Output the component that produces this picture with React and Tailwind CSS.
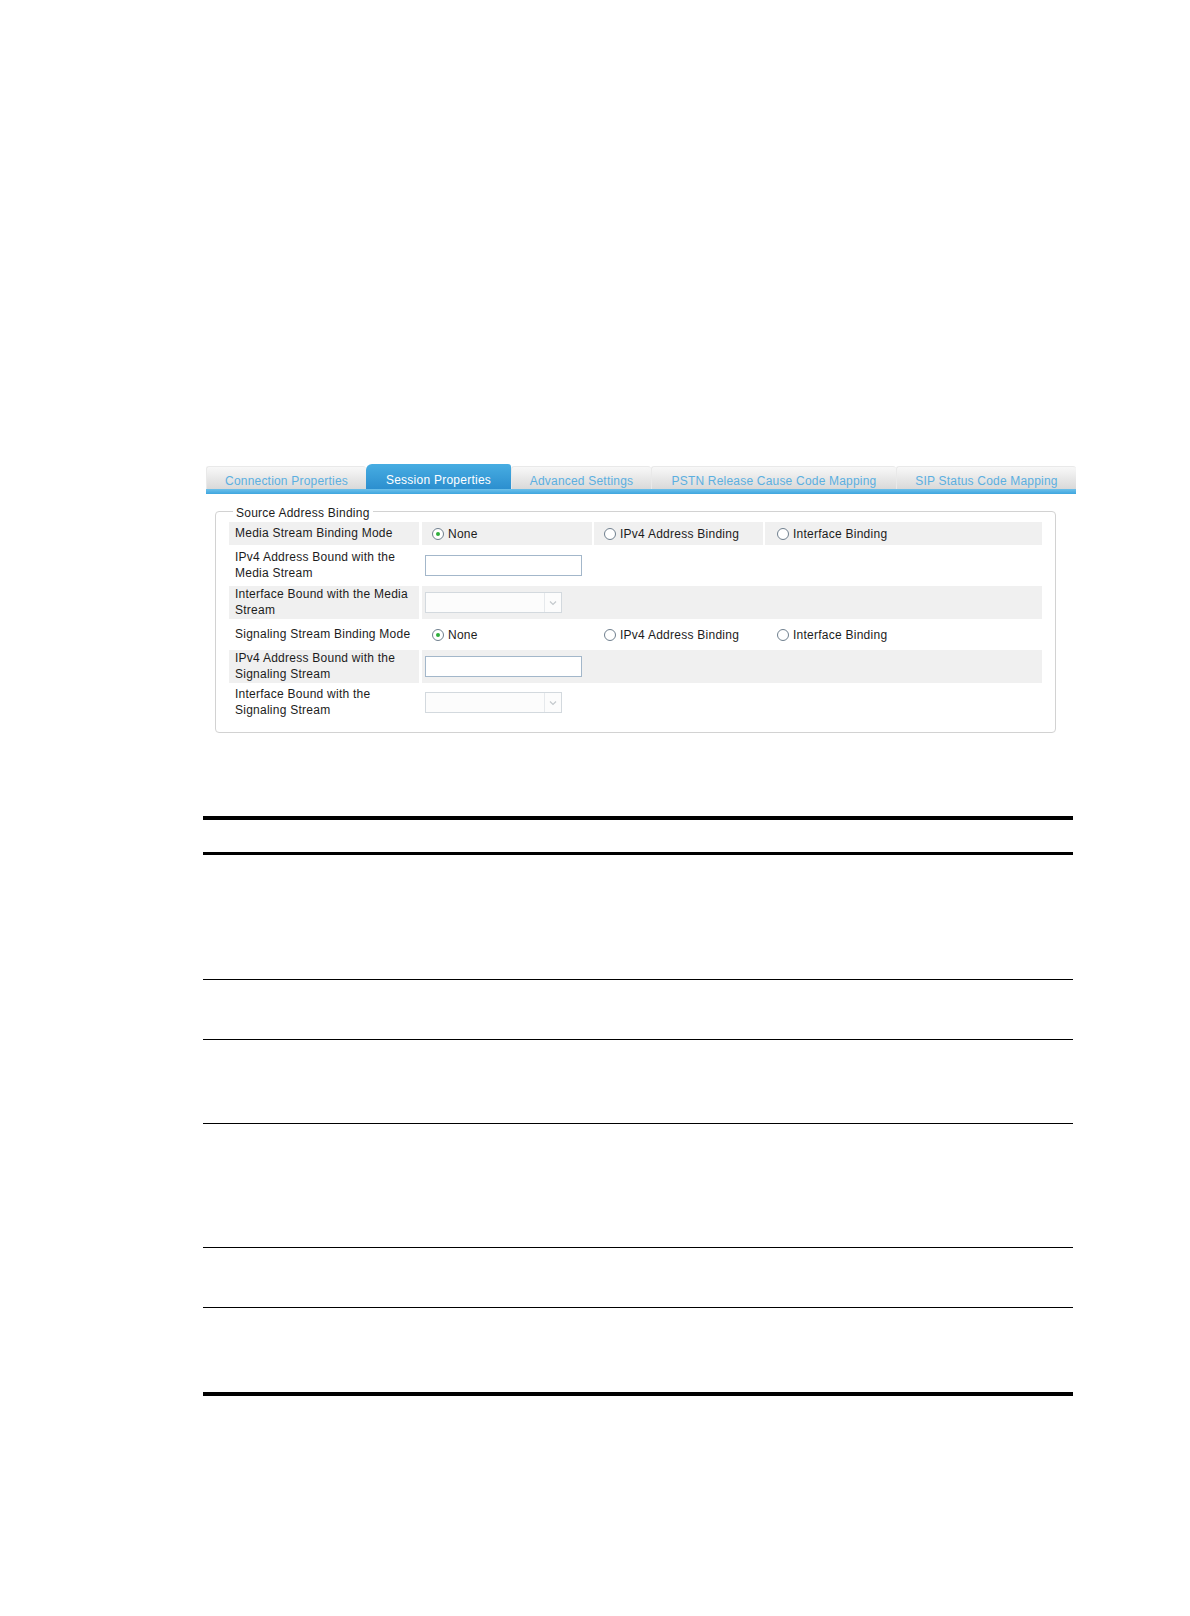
import React from 'react';

const tabs = [
    { label: 'Connection Properties', w: 'w-[160px]' },
    { label: 'Session Properties', w: 'w-[145px]', active: true },
    { label: 'Advanced Settings', w: 'w-[140px]' },
    { label: 'PSTN Release Cause Code Mapping', w: 'w-[245px]' },
    { label: 'SIP Status Code Mapping', w: 'w-[180px]' },
];

const Radio = ({ checked, label }) => (
    <span className="flex items-center gap-[4px]">
        <span className="flex h-[12px] w-[12px] items-center justify-center rounded-full border border-[#6f7f8e] bg-white">
            {checked && <span className="h-[4px] w-[4px] rounded-full bg-[#2fae3c]" />}
        </span>
        <span>{label}</span>
    </span>
);

const TextBox = () => (
    <div className="h-[21px] w-[157px] border border-[#a3b7ca] bg-white" />
);

const SelectBox = () => (
    <div className="flex h-[21px] w-[137px] border border-[#d3d9de] bg-[#fcfcfc]">
        <div className="flex-1" />
        <div className="flex w-[17px] items-center justify-center border-l border-[#e6e9ec]">
            <svg width="8" height="6" viewBox="0 0 8 6">
                <path d="M1 1.5 L4 4.5 L7 1.5" fill="none" stroke="#c3c8cc" strokeWidth="1.2" />
            </svg>
        </div>
    </div>
);

const Label = ({ children, gray }) => (
    <div className={`flex w-[190px] items-center px-[6px] leading-[15.5px] ${gray ? 'bg-[#f0f0f0]' : ''}`}>
        {children}
    </div>
);

const ModeRow = ({ label, gray, h }) => (
    <div className={`flex ${h}`}>
        <Label gray={gray}>{label}</Label>
        <div className={`ml-[3px] flex w-[170px] items-center pl-[10px] ${gray ? 'bg-[#f0f0f0]' : ''}`}>
            <Radio checked label="None" />
        </div>
        <div className={`ml-[2px] flex w-[169px] items-center pl-[10px] ${gray ? 'bg-[#f0f0f0]' : ''}`}>
            <Radio label="IPv4 Address Binding" />
        </div>
        <div className={`ml-[2px] flex flex-1 items-center pl-[12px] ${gray ? 'bg-[#f0f0f0]' : ''}`}>
            <Radio label="Interface Binding" />
        </div>
    </div>
);

const FieldRow = ({ label, gray, h, children }) => (
    <div className={`flex ${h}`}>
        <Label gray={gray}>{label}</Label>
        <div className={`ml-[3px] flex flex-1 items-center pl-[3px] ${gray ? 'bg-[#f0f0f0]' : ''}`}>
            {children}
        </div>
    </div>
);

// empty table under the screenshot, only its rules are visible
const tableRows = ['h-[125px]', 'h-[60px]', 'h-[84px]', 'h-[124px]', 'h-[60px]'];

export default function App() {
    return (
        <div className="min-h-[1616px] w-[1190px] bg-white font-['Liberation_Sans',Arial,sans-serif] text-[12px] tracking-[0.25px] text-[#1c1c1c]">
            <div className="pl-[206px] pt-[464px]">
                <div className="w-[870px]">
                    <div className="flex h-[25px] items-end">
                        {tabs.map((t) =>
                            t.active ? (
                                <div
                                    key={t.label}
                                    className={`${t.w} flex h-[25px] items-center justify-center rounded-tl-[6px] rounded-tr-[3px] bg-linear-to-b from-[#47ade2] to-[#2c8fcf] pt-[6px] text-white`}
                                >
                                    {t.label}
                                </div>
                            ) : (
                                <div
                                    key={t.label}
                                    className={`${t.w} flex h-[23px] items-center justify-center rounded-t-[3px] border-l border-t border-[#e9e9e9] bg-linear-to-b from-[#f8f8f8] to-[#d9d9d9] pt-[5px] tracking-[0.2px] text-[#5cafe0]`}
                                >
                                    {t.label}
                                </div>
                            )
                        )}
                    </div>
                    <div className="h-[5px] bg-linear-to-b from-[#6cc0ea] to-[#3ea6df]" />
                </div>
            </div>

            <div className="relative ml-[215px] mt-[17px] w-[841px] rounded-[4px] border border-[#d2d2d2] px-[13px] pb-[11px] pt-[10px]">
                <span className="absolute -top-[6px] left-[17px] bg-white px-[3px] leading-[15px]">
                    Source Address Binding
                </span>
                <div className="flex flex-col gap-px">
                    <ModeRow label="Media Stream Binding Mode" gray h="h-[23px]" />
                    <FieldRow label={<span>IPv4 Address Bound with the<br />Media Stream</span>} h="h-[39px]">
                        <TextBox />
                    </FieldRow>
                    <FieldRow label={<span>Interface Bound with the Media<br />Stream</span>} gray h="h-[33px]">
                        <SelectBox />
                    </FieldRow>
                    <ModeRow label="Signaling Stream Binding Mode" h="h-[29px]" />
                    <FieldRow label={<span>IPv4 Address Bound with the<br />Signaling Stream</span>} gray h="h-[33px]">
                        <TextBox />
                    </FieldRow>
                    <FieldRow label={<span>Interface Bound with the<br />Signaling Stream</span>} h="h-[37px]">
                        <SelectBox />
                    </FieldRow>
                </div>
            </div>

            <div className="ml-[203px] mt-[83px] w-[870px]">
                <div className="h-[39px] border-b-[3px] border-t-4 border-black" />
                {tableRows.map((h, i) => (
                    <div key={i} className={`${h} border-b-[1.5px] border-black`} />
                ))}
                <div className="h-[88px] border-b-4 border-black" />
            </div>
        </div>
    );
}
